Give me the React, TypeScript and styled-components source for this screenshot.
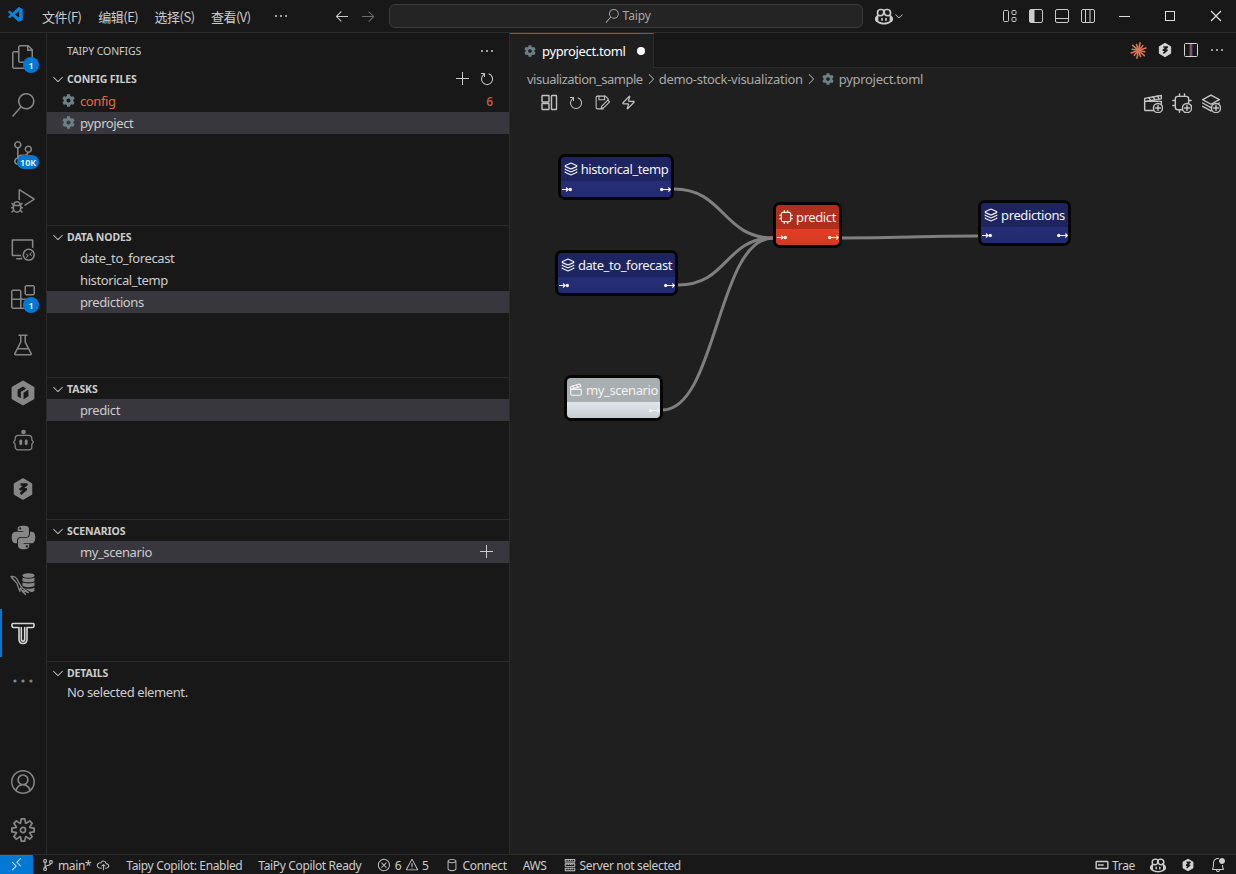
import React from "react";
import styled, { createGlobalStyle } from "styled-components";
import {
  VscFiles, VscSearch, VscSourceControl, VscDebugAlt, VscRemoteExplorer, VscExtensions, VscBeaker,
  VscAccount, VscSettingsGear, VscEllipsis, VscChevronDown, VscChevronRight, VscAdd, VscRefresh, VscVscode,
  VscArrowLeft, VscArrowRight, VscChromeMinimize, VscChromeMaximize, VscChromeClose,
  VscRemote, VscCloudUpload, VscError, VscWarning, VscDatabase, VscBellDot, VscServer,
  VscCopilot,
} from "react-icons/vsc";
import { FaCog, FaPython } from "react-icons/fa";
import { Layers, Clapperboard, Zap } from "lucide-react";

const FONT = `"Noto Sans", "Noto Sans CJK SC", sans-serif`;

const Global = createGlobalStyle`
  html, body { margin: 0; padding: 0; background: #181818; }
  #root { width: 1236px; height: 874px; overflow: hidden; }
  * { box-sizing: border-box; }
`;

const Shell = styled.div`
  width: 1236px; height: 874px; display: flex; flex-direction: column;
  background: #181818; color: #ccc; font-family: ${FONT}; font-size: 13px; letter-spacing: -0.4px;
`;
const TitleBar = styled.header`
  height: 33px; flex: none; display: flex; align-items: center; border-bottom: 1px solid #2b2b2b;
  position: relative; padding-left: 7px;
`;
const Logo = styled.div`width: 20px; height: 20px; display: flex; color: #0a84d8; margin-right: 15px;`;
const MenuItem = styled.span`
  width: 56.3px; font-family: "Noto Sans CJK SC", "Noto Sans", sans-serif; font-size: 13px; color: #ccc; letter-spacing: -0.5px; white-space: nowrap;
`;
const More = styled.span`display: flex; margin-left: 6px; color: #ccc;`;
const NavArrows = styled.div`display: flex; gap: 10px; margin-left: 45px; width: 55px;`;
const NavArrow = styled.span<{ $dim?: boolean }>`display: flex; color: ${(p) => (p.$dim ? "#6b6b6b" : "#ccc")};`;
const SearchBox = styled.div`
  width: 474px; height: 24px; border: 1px solid #3c3c3c; border-radius: 6px; background: #242424;
  display: flex; align-items: center; justify-content: center; gap: 4px; color: #a8a8a8; font-size: 12px; letter-spacing: -0.1px; padding: 0 0 1px 3px;
`;
const CopilotWrap = styled.div`display: flex; align-items: center; margin-left: 12px; color: #ccc;`;
const TitleRight = styled.div`display: flex; align-items: center; margin-left: auto; margin-right: -3px;`;
const LayoutBtns = styled.div`display: flex; gap: 10px; margin-right: 5px; color: #ccc;`;
const WinBtn = styled.span`width: 46px; display: flex; justify-content: center; color: #ddd;`;

const Body = styled.div`flex: 1; min-height: 0; display: flex;`;

const Activity = styled.nav`
  width: 47px; flex: none; display: flex; flex-direction: column; border-right: 1px solid #2b2b2b; color: #868686;
`;
const ActItem = styled.div<{ $active?: boolean }>`
  height: 48px; flex: none; display: flex; align-items: center; justify-content: center; position: relative;
  color: ${(p) => (p.$active ? "#d7d7d7" : "#868686")};
  ${(p) => p.$active && `&::before{content:"";position:absolute;left:0;top:0;bottom:0;width:2px;background:#0078d4;}`}
`;
const Spacer = styled.div`flex: 1;`;
const Badge = styled.span<{ $wide?: boolean }>`
  position: absolute; left: ${(p) => (p.$wide ? "17px" : "23px")}; top: ${(p) => (p.$wide ? "26px" : "24px")};
  min-width: 16px; height: ${(p) => (p.$wide ? "14px" : "16px")}; border-radius: 8px; background: #0078d4; color: #fff;
  font-size: 9px; font-weight: 600; letter-spacing: 0; display: flex; align-items: center; justify-content: center;
  padding: 0 ${(p) => (p.$wide ? "3px" : "0")};
`;

const Sidebar = styled.aside`
  width: 463px; flex: none; display: flex; flex-direction: column; border-right: 1px solid #2b2b2b;
`;
const SideTitle = styled.div`
  height: 35px; flex: none; display: flex; align-items: center; justify-content: space-between;
  padding: 1px 14px 0 20px; font-size: 10.5px; letter-spacing: -0.1px; color: #ccc;
`;
const TinyBtn = styled.span`display: flex; color: #ccc;`;
const SectionHead = styled.div`
  height: 22px; display: flex; align-items: center; padding: 0 14px 0 3px; font-size: 10.5px; font-weight: 700; letter-spacing: -0.1px; color: #ccc;
`;
const Section = styled.section<{ $h?: number; $first?: boolean }>`
  flex: ${(p) => (p.$h ? `none` : 1)}; height: ${(p) => (p.$h ? `${p.$h}px` : "auto")};
  ${(p) => !p.$first && `border-top: 1px solid #2b2b2b;`}
  ${SectionHead} { height: ${(p) => (p.$first ? 22 : 21)}px; }
`;
const Chevron = styled.span`display: flex; width: 17px; color: #ccc;`;
const HeadActions = styled.span`display: flex; gap: 8px; margin-left: auto; color: #ccc;`;
const Row = styled.div<{ $selected?: boolean; $error?: boolean }>`
  height: 22px; display: flex; align-items: center; padding: 0 16px 0 33px; position: relative;
  background: ${(p) => (p.$selected ? "#37373d" : "transparent")};
  color: ${(p) => (p.$error ? "#f0614d" : "#ccc")};
`;
const RowIcon = styled.span`position: absolute; left: 15px; top: 4px; display: flex; color: #6d8086;`;
const RowCount = styled.span`margin-left: auto; color: #b9574a; font-size: 12px; font-weight: 600; letter-spacing: 0;`;
const RowPlus = styled.span`margin-left: auto; display: flex; margin-right: -2px; color: #ccc;`;
const Message = styled.div`height: 17px; line-height: 17px; margin-top: 1px; padding-left: 20px; color: #ccc;`;

const Editor = styled.main`flex: 1; min-width: 0; display: flex; flex-direction: column; background: #1f1f1f;`;
const TabBar = styled.div`
  height: 35px; flex: none; display: flex; align-items: stretch; background: #181818; border-bottom: 1px solid #2b2b2b;
`;
const Tab = styled.div`
  width: 144px; margin-bottom: -1px; background: #1f1f1f; border-top: 1px solid #0078d4; border-right: 1px solid #2b2b2b;
  display: flex; align-items: center; padding-left: 14px; color: #fff; letter-spacing: -0.35px;
`;
const TabIcon = styled.span`display: flex; margin-right: 6px; color: #6d8086;`;
const Dot = styled.span`width: 8px; height: 8px; border-radius: 50%; background: #fff; margin-left: 11px;`;
const EditorActions = styled.div`margin-left: auto; display: flex; align-items: center; gap: 10px; padding-right: 11px; color: #ccc;`;
const Crumbs = styled.div`
  height: 22px; flex: none; display: flex; align-items: center; padding-left: 17px; color: #a9a9a9;
`;
const Crumb = styled.span<{ $ls: number }>`letter-spacing: ${(p) => p.$ls}px;`;
const CrumbSep = styled.span`display: flex; color: #a9a9a9;`;
const CrumbGear = styled.span`display: flex; margin: 0 5px 0 3px; color: #6d8086;`;
const GraphBar = styled.div`
  height: 25px; flex: none; display: flex; align-items: center; justify-content: space-between; padding: 0 15px 0 31px; color: #c4c4c4;
`;
const ToolGroup = styled.div<{ $gap: number }>`display: flex; align-items: center; gap: ${(p) => p.$gap}px;`;
const Diagram = styled.div`flex: 1; position: relative;`;
const Edges = styled.svg`position: absolute; left: 0; top: 0; width: 100%; height: 100%;`;
const Node = styled.div<{ $x: number; $y: number; $w: number }>`
  position: absolute; left: ${(p) => p.$x - 510}px; top: ${(p) => p.$y - 115}px; width: ${(p) => p.$w}px; height: 46px;
  border: 3px solid #050505; border-radius: 7px; overflow: hidden; display: flex; flex-direction: column; color: #f2f2f2;
`;
const NodeHead = styled.div<{ $bg: string }>`
  height: 24px; flex: none; background: ${(p) => p.$bg}; display: flex; align-items: center; justify-content: center; gap: 3px; white-space: nowrap;
`;
const NodeFoot = styled.div<{ $from: string; $to: string; $end?: boolean }>`
  flex: 1; background: linear-gradient(${(p) => p.$from}, ${(p) => p.$to}); display: flex; align-items: center;
  justify-content: ${(p) => (p.$end ? "flex-end" : "space-between")}; padding: 0 0 0 1px;
`;

const StatusBar = styled.footer`
  height: 20px; flex: none; display: flex; align-items: center; border-top: 1px solid #2b2b2b; font-size: 12px; letter-spacing: -0.35px; color: #ccc; white-space: nowrap;
`;
const Remote = styled.div`width: 33px; height: 19px; background: #0078d4; color: #fff; display: flex; align-items: center; justify-content: center;`;
const StatusLeft = styled.div`display: flex; align-items: center; gap: 16px; padding: 1px 0 0 8px;`;
const StatusRight = styled.div`display: flex; align-items: center; gap: 15px; margin-left: auto; padding: 1px 10px 0 0;`;
const StatusItem = styled.span<{ $gap?: number }>`display: flex; align-items: center; gap: ${(p) => p.$gap ?? 3}px;`;

const Stroke = (p: { size?: number; children: React.ReactNode; sw?: number; fill?: string }) => (
  <svg width={p.size ?? 16} height={p.size ?? 16} viewBox="0 0 24 24" fill={p.fill ?? "none"} stroke="currentColor" strokeWidth={p.sw ?? 1.5} strokeLinecap="round" strokeLinejoin="round">
    {p.children}
  </svg>
);

const HexCube = () => (
  <Stroke size={26} sw={0}>
    <path fill="currentColor" fillRule="evenodd" d="M12 .5 22.5 6.5v11L12 23.5 1.500 17.500v-11zM12 6 7 9v6l3 1.800v-6L15 8zm5 3-4.500 2.700v6L17 15z" />
  </Stroke>
);
const Bot = () => (
  <Stroke size={25} sw={1.2}>
    <circle cx="12" cy="2.800" r="1.600" fill="currentColor" />
    <path d="M7 6h10c2 0 3 1.500 3 3v1.500l1.500 2-1.500 2V17c0 1.500-1 3-3 3H7c-2 0-3-1.500-3-3v-2.500L2.500 12.500l1.500-2V9c0-1.500 1-3 3-3z" />
    <rect x="8" y="10" width="2.800" height="5.500" rx="1.400" fill="currentColor" stroke="none" />
    <rect x="13.200" y="10" width="2.800" height="5.500" rx="1.400" fill="currentColor" stroke="none" />
  </Stroke>
);
const ZHex = ({ size = 24, bg = "currentColor", fg = "#181818" }: { size?: number; bg?: string; fg?: string }) => (
  <svg width={size} height={size} viewBox="0 0 24 24" fill="none">
    <path fill={bg} stroke={bg} strokeWidth="1.500" strokeLinejoin="round" d="M12 2 20.500 7v10L12 22l-8.500-5V7z" />
    <path stroke={fg} strokeWidth="2.600" strokeLinejoin="round" d="M9.500 7.500h6l-6 4.800h5.500l-5.500 4.700" />
  </svg>
);
const MysqlDb = () => (
  <svg width="26" height="26" viewBox="0 0 26 26" fill="none" stroke="currentColor" strokeWidth="1.300" strokeLinecap="round" strokeLinejoin="round">
    <path d="M1 4.500c3-.5 5 .5 6.500 3.500 1.500 3 3 6 5 8 2 1.500 4 3 6 4.500-2-.5-4-1-5.500-2 .5 1.500 1.500 3 2.500 4-2.500-2-4-4-5-6.500-.5 1-1 2-.5 3.500-1.500-2.500-2-5.500-3-8-1-1.500-3.500-3.500-6-7z" />
    <g fill="currentColor" stroke="none">
      <ellipse cx="18.500" cy="3.500" rx="6" ry="2.300" />
      <path d="M12.500 5.500c1 1.500 11 1.500 12 0v3.500c-1 1.800-11 1.800-12 0zM12.500 10.300c1 1.500 11 1.500 12 0v3.500c-1 1.800-11 1.800-12 0zM14 16.200c3 1 8.500 1 10.500-.8v3c-.5 1-2 1.500-3.500 1.600z" />
    </g>
  </svg>
);
const TaipyT = () => (
  <Stroke size={24} sw={1.6}>
    <path d="M2 2.500h20c1.500 0 1.500 4-.5 4H16V18c0 3-1.500 4.500-4 4.500S8 21 8 18V6.500H2.500c-2 0-2-4-.5-4z" />
    <path d="M10.300 6.500V18c0 1.500.7 2.200 1.700 2.200s1.700-.7 1.700-2.200V6.500" />
  </Stroke>
);
const ColorDots = () => (
  <svg width="20" height="4" viewBox="0 0 20 4">
    <circle cx="2" cy="2" r="1.600" fill="#7d8a9a" />
    <circle cx="10" cy="2" r="1.600" fill="#8f8a7d" />
    <circle cx="18" cy="2" r="1.600" fill="#8a7f7a" />
  </svg>
);
const SidebarLayout = ({ kind }: { kind: "left" | "bottom" | "right" }) => (
  <svg width="16" height="16" viewBox="0 0 16 16" fill="none" stroke="currentColor" strokeWidth="1">
    <rect x="1.500" y="1.500" width="13" height="13" rx="1.500" />
    {kind === "left" && <path d="M2 2h4v12H2z" fill="currentColor" stroke="none" />}
    {kind === "left" && <path d="M6 2v12" />}
    {kind === "bottom" && <path d="M2 10.500h12" />}
    {kind === "right" && <path d="M10 2v12" />}
    {kind === "right" && <path d="M5.500 2v12" />}
  </svg>
);
const LayoutControls = () => (
  <svg width="16" height="16" viewBox="0 0 16 16" fill="none" stroke="currentColor" strokeWidth="1">
    <rect x="1.500" y="2.500" width="5" height="11" rx="1" />
    <rect x="10" y="2.500" width="4" height="4" rx="1" />
    <rect x="10" y="9.500" width="4" height="4" rx="1" />
  </svg>
);
const GraphLayout = () => (
  <svg width="17" height="17" viewBox="0 0 17 17" fill="none" stroke="currentColor" strokeWidth="1.400">
    <rect x="1" y="1.500" width="7" height="6.500" rx=".6" />
    <rect x="1" y="9.500" width="7" height="6" rx=".6" />
    <rect x="10.500" y="1.500" width="5" height="14" rx=".6" />
  </svg>
);
const Star = () => (
  <svg width="17" height="17" viewBox="0 0 24 24" stroke="#d97757" strokeWidth="2.300" strokeLinecap="round">
    {Array.from({ length: 12 }).map((_, i) => {
      const a = (i * Math.PI) / 6 + 0.2;
      const r = i % 2 ? 11 : 9;
      return <line key={i} x1={12} y1={12} x2={12 + r * Math.cos(a)} y2={12 + r * Math.sin(a)} />;
    })}
  </svg>
);
const SplitEditor = () => (
  <svg width="16" height="16" viewBox="0 0 16 16" fill="none">
    <rect x="1.500" y="1.500" width="13" height="13" rx="1" stroke="#d5d5d5" />
    <path d="M8 2v12" stroke="#d5d5d5" />
    <path d="M7 2v12" stroke="#b03030" />
    <path d="M9 2v12" stroke="#3040b0" />
  </svg>
);
const SaveEdit = () => (
  <Stroke size={17} sw={1.500}>
    <path d="M13 21H5a2 2 0 0 1-2-2V5a2 2 0 0 1 2-2h11l4 4v2" />
    <path d="M7 3v5h8V3" />
    <path d="M22 11l-8.500 8.500-3.500 1 1-3.500L19.500 8.500z" />
  </Stroke>
);
const PlusMark = () => (
  <>
    <circle cx="18" cy="18" r="5.500" fill="#1f1f1f" />
    <path d="M18 15v6M15 18h6" />
  </>
);
const Chip = ({ size = 16, plus }: { size?: number; plus?: boolean }) => (
  <Stroke size={size} sw={plus ? 1.700 : 2}>
    <rect x="4" y="4" width="16" height="16" rx="3" />
    <path d="M9 1v3M15 1v3M9 20v3M15 20v3M1 9h3M1 15h3M20 9h3M20 15h3" />
    {plus && <PlusMark />}
  </Stroke>
);
const Clap = ({ plus }: { plus?: boolean }) => (
  <Stroke size={20} sw={1.700}>
    <path d="M2 10v10a1 1 0 0 0 1 1h18a1 1 0 0 0 1-1V10zM2 10V6.500L22 3v4z" />
    <path d="M7 5.500l2 3M12 4.500l2 3M17 3.500l2 3" />
    {plus && <PlusMark />}
  </Stroke>
);
const Stack = ({ plus }: { plus?: boolean }) => (
  <Stroke size={20} sw={1.700}>
    <path d="M12 2.500 22 8l-10 5.500L2 8z" />
    <path d="M2 12l10 5.500L22 12M2 16l10 5.500L22 16" />
    {plus && <PlusMark />}
  </Stroke>
);
const Branch = () => (
  <Stroke size={14} sw={1.800}>
    <circle cx="7" cy="5" r="2.500" />
    <circle cx="7" cy="19" r="2.500" />
    <circle cx="17" cy="7" r="2.500" />
    <path d="M7 7.500v9M17 9.500c0 4-10 3-10 6" />
  </Stroke>
);
const PortIn = () => (
  <svg width="11" height="7" viewBox="0 0 11 7" fill="none" stroke="#f2f2f2" strokeWidth="1.100"><path d="M0 3.500h6M4 1.500l2.200 2-2.200 2" /><circle cx="8.300" cy="3.500" r="1.700" fill="#f2f2f2" stroke="none" /></svg>
);
const PortOut = () => (
  <svg width="11" height="7" viewBox="0 0 11 7" fill="none" stroke="#f2f2f2" strokeWidth="1.100"><circle cx="1.700" cy="3.500" r="1.700" fill="#f2f2f2" stroke="none" /><path d="M3 3.500h7.500M8.300 1.500l2.200 2-2.200 2" /></svg>
);

const rows = { blue: ["#1d2460", "#262e76", "#222a6e"], red: ["#b02e1c", "#e33f25", "#cf3a22"], grey: ["#a9aeb0", "#dfe5ea", "#c8ced2"] } as const;

function GraphNode({ x, y, w, kind, label }: { x: number; y: number; w: number; kind: keyof typeof rows; label: string }) {
  const [h, a, b] = rows[kind];
  return (
    <Node $x={x} $y={y} $w={w}>
      <NodeHead $bg={h}>
        {kind === "blue" && <Layers size={14} />}
        {kind === "red" && <Chip size={14} />}
        {kind === "grey" && <Clapperboard size={14} />}
        {label}
      </NodeHead>
      <NodeFoot $from={a} $to={b} $end={kind === "grey"}>
        {kind !== "grey" && <PortIn />}
        <PortOut />
      </NodeFoot>
    </Node>
  );
}

export default function App() {
  return (
    <Shell>
      <Global />
      <TitleBar>
        <Logo><VscVscode size={18} /></Logo>
        <MenuItem>文件(F)</MenuItem>
        <MenuItem>编辑(E)</MenuItem>
        <MenuItem>选择(S)</MenuItem>
        <MenuItem>查看(V)</MenuItem>
        <More><VscEllipsis size={16} /></More>
        <NavArrows>
          <NavArrow><VscArrowLeft size={16} /></NavArrow>
          <NavArrow $dim><VscArrowRight size={16} /></NavArrow>
        </NavArrows>
        <SearchBox><VscSearch size={14} />Taipy</SearchBox>
        <CopilotWrap><VscCopilot size={18} /><VscChevronDown size={12} /></CopilotWrap>
        <TitleRight>
          <LayoutBtns>
            <LayoutControls />
            <SidebarLayout kind="left" />
            <SidebarLayout kind="bottom" />
            <SidebarLayout kind="right" />
          </LayoutBtns>
          <WinBtn><VscChromeMinimize size={16} /></WinBtn>
          <WinBtn><VscChromeMaximize size={16} /></WinBtn>
          <WinBtn><VscChromeClose size={16} /></WinBtn>
        </TitleRight>
      </TitleBar>
      <Body>
        <Activity>
          <ActItem><VscFiles size={24} /><Badge>1</Badge></ActItem>
          <ActItem><VscSearch size={24} /></ActItem>
          <ActItem><VscSourceControl size={24} /><Badge $wide>10K</Badge></ActItem>
          <ActItem><VscDebugAlt size={24} /></ActItem>
          <ActItem><VscRemoteExplorer size={24} /></ActItem>
          <ActItem><VscExtensions size={24} /><Badge>1</Badge></ActItem>
          <ActItem><VscBeaker size={24} /></ActItem>
          <ActItem><HexCube /></ActItem>
          <ActItem><Bot /></ActItem>
          <ActItem><ZHex /></ActItem>
          <ActItem><FaPython size={27} /></ActItem>
          <ActItem><MysqlDb /></ActItem>
          <ActItem $active><TaipyT /></ActItem>
          <ActItem><ColorDots /></ActItem>
          <Spacer />
          <ActItem><VscAccount size={24} /></ActItem>
          <ActItem><VscSettingsGear size={24} /></ActItem>
        </Activity>
        <Sidebar>
          <SideTitle>TAIPY CONFIGS<TinyBtn><VscEllipsis size={16} /></TinyBtn></SideTitle>
          <Section $first $h={157}>
            <SectionHead>
              <Chevron><VscChevronDown size={16} /></Chevron>CONFIG FILES
              <HeadActions><VscAdd size={16} /><VscRefresh size={16} /></HeadActions>
            </SectionHead>
            <Row $error><RowIcon><FaCog size={13} /></RowIcon>config<RowCount>6</RowCount></Row>
            <Row $selected><RowIcon><FaCog size={13} /></RowIcon>pyproject</Row>
          </Section>
          <Section $h={152}>
            <SectionHead><Chevron><VscChevronDown size={16} /></Chevron>DATA NODES</SectionHead>
            <Row>date_to_forecast</Row>
            <Row>historical_temp</Row>
            <Row $selected>predictions</Row>
          </Section>
          <Section $h={142}>
            <SectionHead><Chevron><VscChevronDown size={16} /></Chevron>TASKS</SectionHead>
            <Row $selected>predict</Row>
          </Section>
          <Section $h={142}>
            <SectionHead><Chevron><VscChevronDown size={16} /></Chevron>SCENARIOS</SectionHead>
            <Row $selected>my_scenario<RowPlus><VscAdd size={16} /></RowPlus></Row>
          </Section>
          <Section>
            <SectionHead><Chevron><VscChevronDown size={16} /></Chevron>DETAILS</SectionHead>
            <Message>No selected element.</Message>
          </Section>
        </Sidebar>
        <Editor>
          <TabBar>
            <Tab><TabIcon><FaCog size={12} /></TabIcon>pyproject.toml<Dot /></Tab>
            <EditorActions>
              <Star />
              <ZHex size={16} bg="#d5d5d5" />
              <SplitEditor />
              <VscEllipsis size={16} />
            </EditorActions>
          </TabBar>
          <Crumbs>
            <Crumb $ls={-0.5}>visualization_sample</Crumb>
            <CrumbSep><VscChevronRight size={16} /></CrumbSep>
            <Crumb $ls={-0.3}>demo-stock-visualization</Crumb>
            <CrumbSep><VscChevronRight size={16} /></CrumbSep>
            <CrumbGear><FaCog size={12} /></CrumbGear>
            <Crumb $ls={-0.3}>pyproject.toml</Crumb>
          </Crumbs>
          <GraphBar>
            <ToolGroup $gap={10}>
              <GraphLayout />
              <VscRefresh size={16} />
              <SaveEdit />
              <Zap size={15} />
            </ToolGroup>
            <ToolGroup $gap={9}>
              <Clap plus />
              <Chip size={20} plus />
              <Stack plus />
            </ToolGroup>
          </GraphBar>
          <Diagram>
            <Edges fill="none" stroke="#7f7f7f" strokeWidth="3">
              <path d="M164 74 C214 74 213 123 263 123" />
              <path d="M168 170 C218 170 215 123 263 123" />
              <path d="M152 295 C207 295 207 123 263 123" />
              <path d="M331 123 C400 123 400 121 468 121" />
            </Edges>
            <GraphNode x={558} y={154} w={116} kind="blue" label="historical_temp" />
            <GraphNode x={555} y={250} w={123} kind="blue" label="date_to_forecast" />
            <GraphNode x={773} y={202} w={69} kind="red" label="predict" />
            <GraphNode x={978} y={200} w={93} kind="blue" label="predictions" />
            <GraphNode x={564} y={375} w={99} kind="grey" label="my_scenario" />
          </Diagram>
        </Editor>
      </Body>
      <StatusBar>
        <Remote><VscRemote size={15} /></Remote>
        <StatusLeft>
          <StatusItem $gap={5}>
            <StatusItem><Branch />main*</StatusItem>
            <VscCloudUpload size={14} />
          </StatusItem>
          <StatusItem>Taipy Copilot: Enabled</StatusItem>
          <StatusItem>TaiPy Copilot Ready</StatusItem>
          <StatusItem $gap={3.4}>
            <VscError size={14} />6<VscWarning size={14} />5
          </StatusItem>
          <StatusItem $gap={4}><VscDatabase size={14} />Connect</StatusItem>
          <StatusItem>AWS</StatusItem>
          <StatusItem><VscServer size={14} />Server not selected</StatusItem>
        </StatusLeft>
        <StatusRight>
          <StatusItem><Stroke size={14} sw={2.4}><rect x="2" y="6" width="20" height="12" rx="1" /><path d="M6 12h3M11 12h3" /></Stroke>Trae</StatusItem>
          <VscCopilot size={16} />
          <ZHex size={14} bg="#d5d5d5" />
          <VscBellDot size={16} />
        </StatusRight>
      </StatusBar>
    </Shell>
  );
}
